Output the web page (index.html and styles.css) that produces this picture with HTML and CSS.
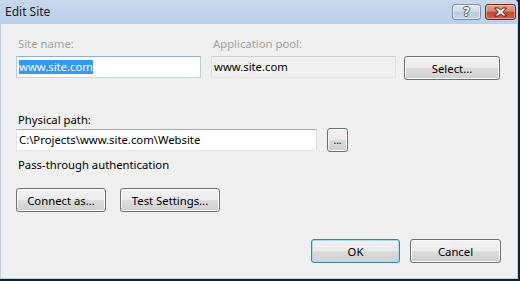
FILE: index.html
```html
<!doctype html>
<html>
<head>
  <meta charset="utf-8">
  <title>Edit Site</title>
  <link rel="stylesheet" href="styles.css">
</head>
<body>
<div class="window">
  <div class="titlebar">
    <span class="title">Edit Site</span>
    <div class="caption-buttons">
      <span class="cap cap-help">?</span>
      <span class="cap cap-close">
        <svg width="15" height="10" viewBox="0 0 15 10">
          <path d="M1.5 1h3.6l2.4 2.1L9.9 1h3.6L9.7 5l3.8 4H9.9L7.5 6.9 5.1 9H1.5l3.8-4z" fill="#fff" stroke="#4a1a12" stroke-width="1" stroke-linejoin="round"/>
        </svg>
      </span>
    </div>
  </div>
  <div class="client">
    <div class="site-grid">
      <label class="lbl disabled">Site name:</label>
      <label class="lbl disabled">Application pool:</label>
      <span></span>
      <div class="textbox focused"><span class="sel">www.site.com</span></div>
      <div class="textbox readonly">www.site.com</div>
      <button class="btn btn-select">Select...</button>
    </div>
    <label class="lbl path-lbl">Physical path:</label>
    <div class="path-row">
      <div class="textbox path">C:\Projects\www.site.com\Website</div>
      <button class="btn btn-browse">...</button>
    </div>
    <div class="lbl auth">Pass-through authentication</div>
    <div class="conn-row">
      <button class="btn btn-connect">Connect as...</button>
      <button class="btn btn-test">Test Settings...</button>
    </div>
    <div class="dialog-row">
      <button class="btn btn-ok">OK</button>
      <button class="btn btn-cancel">Cancel</button>
    </div>
  </div>
</div>
</body>
</html>
```
FILE: styles.css
```css
*{margin:0;padding:0;box-sizing:border-box;}
body{background:#14202c;font-family:"Noto Sans","Open Sans",sans-serif;font-size:11.3px;color:#000;}

.window{width:520px;height:281px;display:flex;flex-direction:column;background:#b9d1ea;border-right:2px solid #14202c;border-bottom:2px solid #14202c;border-top-right-radius:5px;}

/* title bar */
.titlebar{height:24px;display:flex;justify-content:space-between;padding:0 2px 0 5px;background:linear-gradient(#c8d8ea,#bfd3ea 60%,#b9d1ea);border-top-right-radius:4px;}
.title{font-size:12px;line-height:24px;color:#1b1426;}
.caption-buttons{display:flex;gap:4px;padding-top:4px;}
.cap{height:16px;display:flex;align-items:center;justify-content:center;border-radius:3px;}
.cap-help{width:29px;border:1px solid #7890ad;background:linear-gradient(#e2eaf3,#d0dcea 45%,#b9cbe0 50%,#c5d6ea);box-shadow:inset 0 0 0 1px rgba(255,255,255,.5);font-family:"DejaVu Sans",sans-serif;font-size:12px;font-weight:bold;line-height:14px;color:#fff;text-shadow:1px 0 0 #505a66,-1px 0 0 #505a66,0 1px 0 #505a66,0 -1px 0 #505a66;}
.cap-close{width:31px;border:1px solid #6e2a1f;background:linear-gradient(#e5a494,#d68170 45%,#c4452e 50%,#d0634a);box-shadow:inset 0 0 0 1px rgba(255,220,210,.45);}

/* client area */
.client{flex:1;margin:0 1px 1px;background:#f0f0f0;padding:12px 16px 0 15px;display:flex;flex-direction:column;}
.lbl{display:block;line-height:16px;padding-left:2px;}
.lbl.disabled{color:#a3a3a3;}

.site-grid{display:grid;grid-template-columns:195px 193px 96px;grid-template-rows:16px 24px;row-gap:4px;align-items:start;}
.textbox{width:185px;height:22px;border:1px solid;border-color:#abadb3 #dbdfe6 #e3e9ef #e2e3ea;background:#fff;padding:0 2px;line-height:20px;white-space:nowrap;overflow:hidden;}
.textbox.focused{border-color:#8bb0d4 #b5cfe7 #c5daed #b5cfe7;}
.textbox.readonly{background:#f0f0f0;border-color:#c9ccd1 #dfe2e6 #e6eaee #dfe2e6;}
.sel{background:#3399ff;color:#fff;display:inline-block;line-height:13px;padding-bottom:1px;}

.btn{height:24px;border:1px solid #707070;border-radius:3px;background:linear-gradient(#f2f2f2,#ebebeb 50%,#dddddd 50%,#cfcfcf);box-shadow:inset 0 0 0 1px #fbfbfb;font-family:inherit;font-size:11.3px;color:#000;}
.btn-select{width:96px;}

.path-lbl{margin-top:32px;}
.path-row{display:flex;align-items:center;gap:10px;}
.textbox.path{width:301px;}
.btn-browse{width:21px;font-size:10px;}

.auth{margin-top:5px;}
.conn-row{display:flex;gap:14px;margin-top:15px;}
.btn-connect{width:90px;}
.btn-test{width:100px;}

.dialog-row{display:flex;justify-content:flex-end;gap:10px;margin-top:27px;}
.btn-ok{width:89px;border-color:#3c7fb1;box-shadow:inset 0 0 0 1px #a8dcf6;}
.btn-cancel{width:91px;}
```
